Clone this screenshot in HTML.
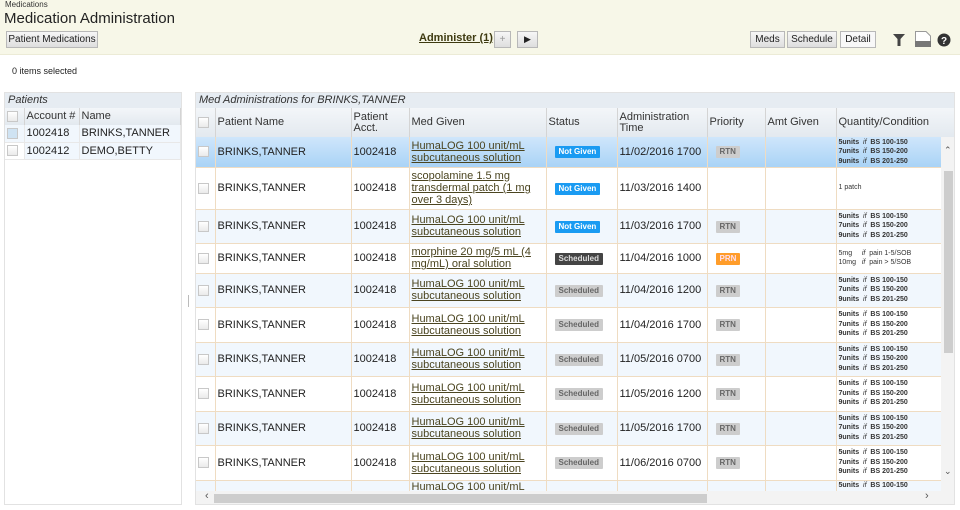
<!DOCTYPE html>
<html><head><meta charset="utf-8">
<style>
*{box-sizing:border-box;margin:0;padding:0}
body{width:960px;height:510px;overflow:hidden;background:#fff;font-family:"Liberation Sans",Arial,sans-serif;color:#222;position:relative}
.abs{position:absolute}
.hdr{left:0;top:0;width:960px;height:55px;background:#f7f7e8;border-bottom:1px solid #ecebd6}
.btn{position:absolute;height:17px;border:1px solid #b8b8b8;background:linear-gradient(#f6f6f6,#dedede);font-size:10px;line-height:15px;text-align:center;color:#222}
.cb{display:inline-block;width:11px;height:11px;border:1px solid #c8c8c8;background:linear-gradient(#fff,#eaeaea);vertical-align:middle}
.ptitle{background:#e6ecf2;font-style:italic;font-size:11px;color:#333;padding-left:3px;line-height:15px;height:15px}
table{border-collapse:collapse;table-layout:fixed}
td,th{font-weight:normal;text-align:left;vertical-align:middle;overflow:hidden;white-space:nowrap}
.mt th{background:linear-gradient(#f3f6f9,#e3e9ef);font-size:11px;line-height:11px;border-right:1px solid #d4d4d4;padding-left:2px;color:#333}
.mt td{font-size:11px;border-right:1px solid #efdcc2;border-bottom:1px solid #efdcc2;padding-left:2px}
.mt tr.e td{background:#f1f7fd}
.mt tr.sel td{background:linear-gradient(#cfe6fb,#a9d3f6)}
.med{color:#4b4520;text-decoration:underline;white-space:normal;line-height:12px;font-size:11px}
.bd{display:inline-block;font-size:8px;font-weight:bold;line-height:12px;height:12px;padding:0 4px;border-radius:1px;color:#fff}
.ng{background:#1a9bf2}
.sc{background:#cdcdcd;color:#666}
.sk{background:#444;color:#ddd}
.rtn{background:#cdcdcd;color:#666;margin-left:6px}
.prn{background:#ff9d2a;color:#fde;margin-left:6px}
.mt td.q{font-size:7px;line-height:9.5px;white-space:pre;font-weight:bold;color:#333}
.q i{font-weight:normal}
</style></head><body>
<div class="abs hdr"></div>
<div class="abs" style="left:5px;top:0;font-size:8px;color:#333">Medications</div>
<div class="abs" style="left:4px;top:10px;font-size:15px;color:#222">Medication Administration</div>
<div class="btn" style="left:6px;top:31px;width:92px">Patient Medications</div>
<div class="abs" style="left:419px;top:32px;font-size:11px;font-weight:bold;color:#3e3a10;text-decoration:underline">Administer (1)</div>
<div class="btn" style="left:494px;top:31px;width:17px;color:#999">+</div>
<div class="btn" style="left:517px;top:31px;width:21px;font-size:9px">&#9654;</div>
<div class="btn" style="left:750px;top:31px;width:35px">Meds</div>
<div class="btn" style="left:787px;top:31px;width:50px">Schedule</div>
<div class="btn" style="left:840px;top:31px;width:36px;background:#f8f8f8">Detail</div>
<svg class="abs" style="left:892px;top:33px" width="14" height="14"><path d="M1 1H13L8.5 6V13H5.5V6Z" fill="#444"/></svg>
<svg class="abs" style="left:914px;top:31px" width="18" height="17"><path d="M1.5 0.5H12L16.5 5V15.5H1.5Z" fill="#fff" stroke="#999"/><rect x="1" y="10" width="16" height="6" fill="#777"/></svg>
<svg class="abs" style="left:937px;top:33px" width="14" height="14"><circle cx="7" cy="7" r="6.5" fill="#333"/><text x="7" y="11" font-size="10" font-weight="bold" fill="#fff" text-anchor="middle" font-family="Liberation Sans">?</text></svg>
<div class="abs" style="left:12px;top:66px;font-size:9px;color:#222">0 items selected</div>

<div class="abs" style="left:4px;top:92px;width:178px;height:413px;border:1px solid #e2e2e2">
 <div class="ptitle">Patients</div>
 <table class="mt" style="width:176px">
  <colgroup><col style="width:19px"><col style="width:55px"><col></colgroup>
  <tr style="height:17px"><th><span class="cb"></span></th><th style="font-size:11px">Account #</th><th>Name</th></tr>
  <tr style="height:17px" class="e"><td style="border-right:1px solid #e8e8e8;border-bottom:1px solid #e8e8e8"><span class="cb" style="background:#cfe3f3"></span></td><td style="border-color:#e8e8e8">1002418</td><td style="border-color:#e8e8e8">BRINKS,TANNER</td></tr>
  <tr style="height:17px"><td style="border-color:#e8e8e8"><span class="cb"></span></td><td style="border-color:#e8e8e8;background:#f1f7fd">1002412</td><td style="border-color:#e8e8e8;background:#f1f7fd">DEMO,BETTY</td></tr>
 </table>
</div>
<div class="abs" style="left:188px;top:295px;width:1px;height:12px;background:#bbb"></div>

<div class="abs" style="left:195px;top:92px;width:760px;height:413px;border:1px solid #e2e2e2;overflow:hidden">
 <div class="ptitle" style="width:760px">Med Administrations for BRINKS,TANNER</div>
 <div class="abs" style="left:0;top:15px;width:745px;height:383px;overflow:hidden">
 <table class="mt" style="width:745px">
  <colgroup><col style="width:19px"><col style="width:136px"><col style="width:58px"><col style="width:137px"><col style="width:71px"><col style="width:90px"><col style="width:58px"><col style="width:71px"><col style="width:105px"></colgroup>
  <tr style="height:29px"><th><span class="cb"></span></th><th>Patient Name</th><th>Patient<br>Acct.</th><th>Med Given</th><th>Status</th><th>Administration<br>Time</th><th>Priority</th><th>Amt Given</th><th>Quantity/Condition</th></tr>
  <tr class="sel" style="height:30px"><td><span class="cb"></span></td><td>BRINKS,TANNER</td><td>1002418</td><td><div class="med">HumaLOG 100 unit/mL subcutaneous solution</div></td><td style="padding-left:8px"><span class="bd ng">Not Given</span></td><td>11/02/2016 1700</td><td><span class="bd rtn">RTN</span></td><td></td><td class="q">5units  <i>if</i>  BS 100-150
7units  <i>if</i>  BS 150-200
9units  <i>if</i>  BS 201-250</td></tr>
  <tr style="height:42px"><td><span class="cb"></span></td><td>BRINKS,TANNER</td><td>1002418</td><td><div class="med">scopolamine 1.5 mg transdermal patch (1 mg over 3 days)</div></td><td style="padding-left:8px"><span class="bd ng">Not Given</span></td><td>11/03/2016 1400</td><td></td><td></td><td class="q" style="font-weight:normal">1 patch</td></tr>
  <tr class="e" style="height:34px"><td><span class="cb"></span></td><td>BRINKS,TANNER</td><td>1002418</td><td><div class="med">HumaLOG 100 unit/mL subcutaneous solution</div></td><td style="padding-left:8px"><span class="bd ng">Not Given</span></td><td>11/03/2016 1700</td><td><span class="bd rtn">RTN</span></td><td></td><td class="q">5units  <i>if</i>  BS 100-150
7units  <i>if</i>  BS 150-200
9units  <i>if</i>  BS 201-250</td></tr>
  <tr style="height:30px"><td><span class="cb"></span></td><td>BRINKS,TANNER</td><td>1002418</td><td><div class="med">morphine 20 mg/5 mL (4 mg/mL) oral solution</div></td><td style="padding-left:8px"><span class="bd sk">Scheduled</span></td><td>11/04/2016 1000</td><td><span class="bd prn">PRN</span></td><td></td><td class="q" style="font-weight:normal">5mg     <i>if</i>  pain 1-5/SOB
10mg   <i>if</i>  pain &gt; 5/SOB</td></tr>
  <tr class="e" style="height:34px"><td><span class="cb"></span></td><td>BRINKS,TANNER</td><td>1002418</td><td><div class="med">HumaLOG 100 unit/mL subcutaneous solution</div></td><td style="padding-left:8px"><span class="bd sc">Scheduled</span></td><td>11/04/2016 1200</td><td><span class="bd rtn">RTN</span></td><td></td><td class="q">5units  <i>if</i>  BS 100-150
7units  <i>if</i>  BS 150-200
9units  <i>if</i>  BS 201-250</td></tr>
  <tr style="height:35px"><td><span class="cb"></span></td><td>BRINKS,TANNER</td><td>1002418</td><td><div class="med">HumaLOG 100 unit/mL subcutaneous solution</div></td><td style="padding-left:8px"><span class="bd sc">Scheduled</span></td><td>11/04/2016 1700</td><td><span class="bd rtn">RTN</span></td><td></td><td class="q">5units  <i>if</i>  BS 100-150
7units  <i>if</i>  BS 150-200
9units  <i>if</i>  BS 201-250</td></tr>
  <tr class="e" style="height:34px"><td><span class="cb"></span></td><td>BRINKS,TANNER</td><td>1002418</td><td><div class="med">HumaLOG 100 unit/mL subcutaneous solution</div></td><td style="padding-left:8px"><span class="bd sc">Scheduled</span></td><td>11/05/2016 0700</td><td><span class="bd rtn">RTN</span></td><td></td><td class="q">5units  <i>if</i>  BS 100-150
7units  <i>if</i>  BS 150-200
9units  <i>if</i>  BS 201-250</td></tr>
  <tr style="height:35px"><td><span class="cb"></span></td><td>BRINKS,TANNER</td><td>1002418</td><td><div class="med">HumaLOG 100 unit/mL subcutaneous solution</div></td><td style="padding-left:8px"><span class="bd sc">Scheduled</span></td><td>11/05/2016 1200</td><td><span class="bd rtn">RTN</span></td><td></td><td class="q">5units  <i>if</i>  BS 100-150
7units  <i>if</i>  BS 150-200
9units  <i>if</i>  BS 201-250</td></tr>
  <tr class="e" style="height:34px"><td><span class="cb"></span></td><td>BRINKS,TANNER</td><td>1002418</td><td><div class="med">HumaLOG 100 unit/mL subcutaneous solution</div></td><td style="padding-left:8px"><span class="bd sc">Scheduled</span></td><td>11/05/2016 1700</td><td><span class="bd rtn">RTN</span></td><td></td><td class="q">5units  <i>if</i>  BS 100-150
7units  <i>if</i>  BS 150-200
9units  <i>if</i>  BS 201-250</td></tr>
  <tr style="height:35px"><td><span class="cb"></span></td><td>BRINKS,TANNER</td><td>1002418</td><td><div class="med">HumaLOG 100 unit/mL subcutaneous solution</div></td><td style="padding-left:8px"><span class="bd sc">Scheduled</span></td><td>11/06/2016 0700</td><td><span class="bd rtn">RTN</span></td><td></td><td class="q">5units  <i>if</i>  BS 100-150
7units  <i>if</i>  BS 150-200
9units  <i>if</i>  BS 201-250</td></tr>
  <tr class="e" style="height:34px"><td style="vertical-align:top"></td><td></td><td></td><td style="vertical-align:top"><div class="med">HumaLOG 100 unit/mL subcutaneous solution</div></td><td></td><td></td><td></td><td></td><td class="q" style="vertical-align:top">5units  <i>if</i>  BS 100-150</td></tr>
 </table>
 </div>
 <div class="abs" style="left:745px;top:15px;width:14px;height:29px;background:linear-gradient(#f3f6f9,#e3e9ef)"></div>
 <div class="abs" style="left:745px;top:44px;width:14px;height:354px;background:#f3f3f3"></div>
 <div class="abs" style="left:748px;top:52px;font-size:9px;color:#555">&#8963;</div>
 <div class="abs" style="left:748px;top:78px;width:9px;height:182px;background:#cdcdcd"></div>
 <div class="abs" style="left:748px;top:373px;font-size:9px;color:#555">&#8964;</div>
 <div class="abs" style="left:0;top:398px;width:760px;height:14px;background:#f3f3f3"></div>
 <div class="abs" style="left:18px;top:401px;width:493px;height:9px;background:#cdcdcd"></div>
 <div class="abs" style="left:9px;top:397px;font-size:11px;color:#555">&#8249;</div>
 <div class="abs" style="left:729px;top:397px;font-size:11px;color:#555">&#8250;</div>
</div>
</body></html>
